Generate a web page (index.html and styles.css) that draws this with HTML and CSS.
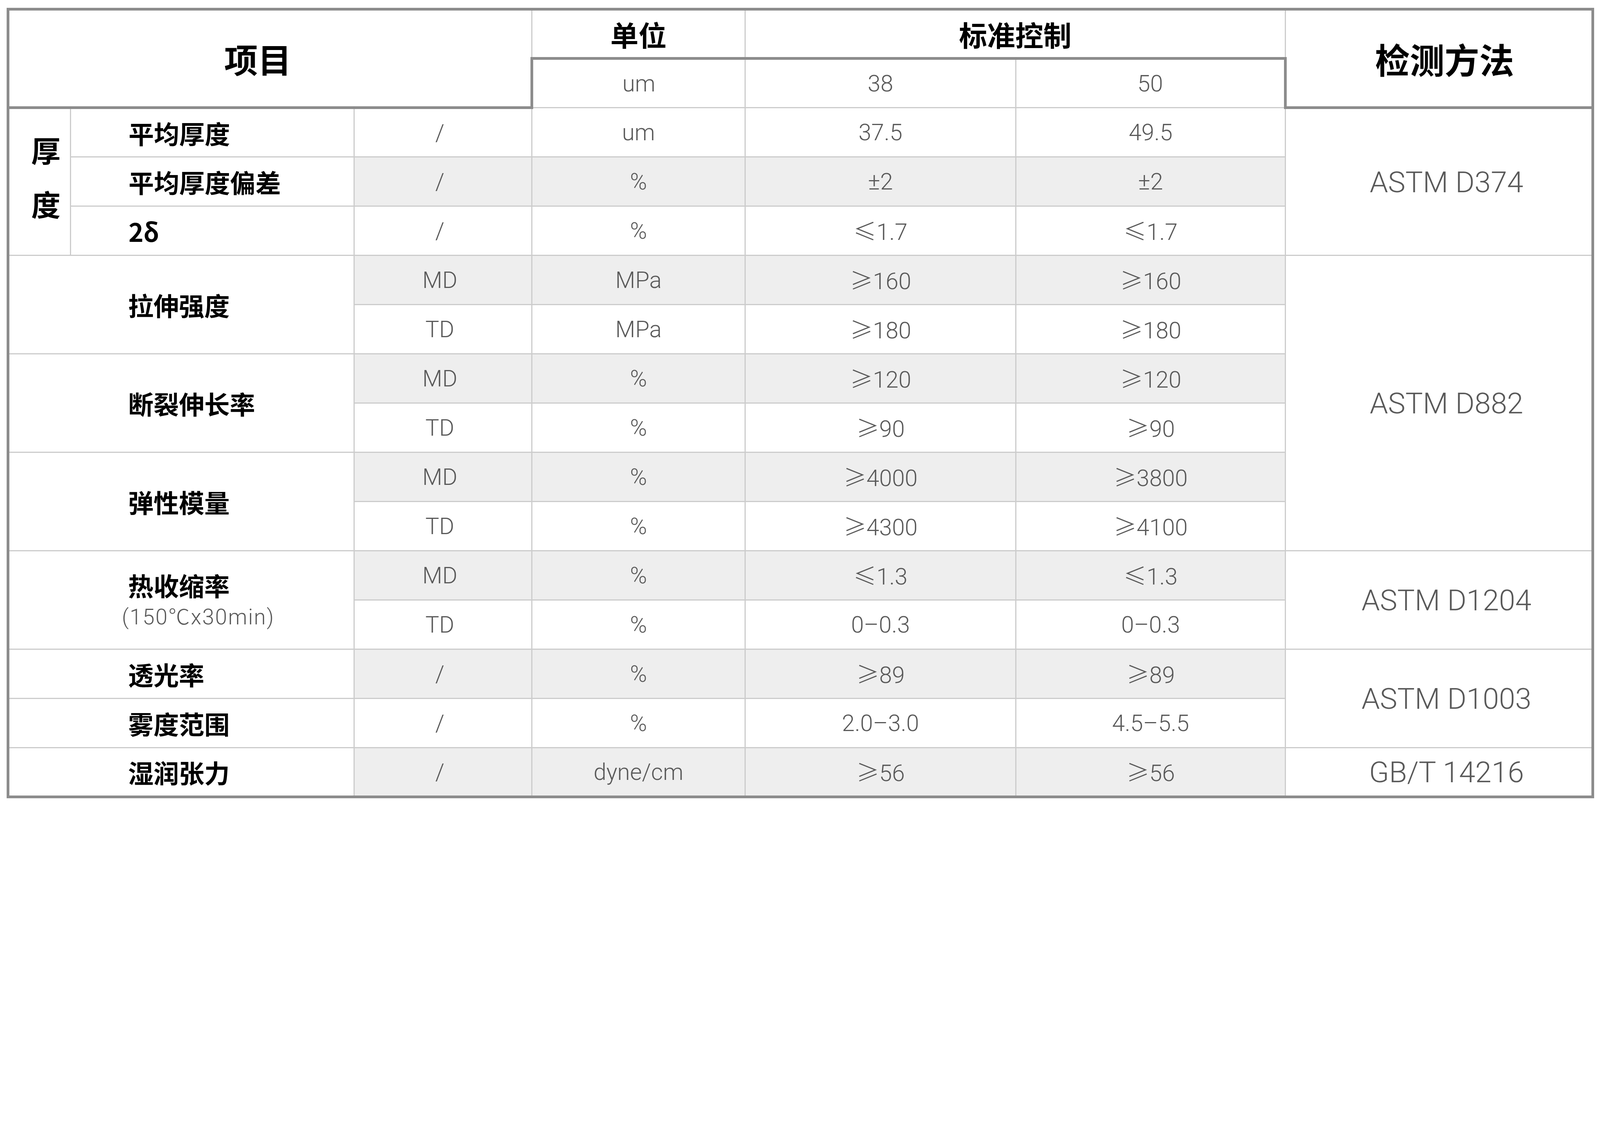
FILE: index.html
```html
<!DOCTYPE html>
<html lang="zh-CN">
<head>
<meta charset="utf-8">
<title>技术参数</title>
<link rel="stylesheet" href="styles.css">
</head>
<body>
<table class="spec">
  <colgroup>
    <col class="c1"><col class="c2"><col class="c3"><col class="c4"><col class="c5"><col class="c6"><col class="c7">
  </colgroup>
  <thead>
    <tr>
      <th colspan="3" rowspan="2" class="h-main h-item">项目</th>
      <th class="h-sub step-b">单位</th>
      <th colspan="2" class="h-sub step-b">标准控制</th>
      <th rowspan="2" class="h-main h-method">检测方法</th>
    </tr>
    <tr>
      <td class="v step-l">um</td>
      <td class="v">38</td>
      <td class="v step-r">50</td>
    </tr>
  </thead>
  <tbody>
    <tr>
      <td rowspan="3" class="grp"><span class="grp-ch">厚</span><span class="grp-ch">度</span></td>
      <td class="name name-in">平均厚度</td>
      <td class="v d">/</td><td class="v">um</td><td class="v">37.5</td><td class="v">49.5</td>
      <td rowspan="3" class="m">ASTM D374</td>
    </tr>
    <tr>
      <td class="name name-in">平均厚度偏差</td>
      <td class="v d sh">/</td><td class="v sh">%</td><td class="v sh">±2</td><td class="v sh">±2</td>
    </tr>
    <tr>
      <td class="name name-in">2δ</td>
      <td class="v d">/</td><td class="v">%</td><td class="v"><span class="cmp">≤</span>1.7</td><td class="v"><span class="cmp">≤</span>1.7</td>
    </tr>

    <tr>
      <td colspan="2" rowspan="2" class="name name-out">拉伸强度</td>
      <td class="v d sh">MD</td><td class="v sh">MPa</td><td class="v sh"><span class="cmp">≥</span>160</td><td class="v sh"><span class="cmp">≥</span>160</td>
      <td rowspan="6" class="m">ASTM D882</td>
    </tr>
    <tr>
      <td class="v d">TD</td><td class="v">MPa</td><td class="v"><span class="cmp">≥</span>180</td><td class="v"><span class="cmp">≥</span>180</td>
    </tr>
    <tr>
      <td colspan="2" rowspan="2" class="name name-out">断裂伸长率</td>
      <td class="v d sh">MD</td><td class="v sh">%</td><td class="v sh"><span class="cmp">≥</span>120</td><td class="v sh"><span class="cmp">≥</span>120</td>
    </tr>
    <tr>
      <td class="v d">TD</td><td class="v">%</td><td class="v"><span class="cmp">≥</span>90</td><td class="v"><span class="cmp">≥</span>90</td>
    </tr>
    <tr>
      <td colspan="2" rowspan="2" class="name name-out">弹性模量</td>
      <td class="v d sh">MD</td><td class="v sh">%</td><td class="v sh"><span class="cmp">≥</span>4000</td><td class="v sh"><span class="cmp">≥</span>3800</td>
    </tr>
    <tr>
      <td class="v d">TD</td><td class="v">%</td><td class="v"><span class="cmp">≥</span>4300</td><td class="v"><span class="cmp">≥</span>4100</td>
    </tr>

    <tr>
      <td colspan="2" rowspan="2" class="name name-out">
        <span class="name-main">热收缩率</span>
        <span class="name-note">(150℃x30min)</span>
      </td>
      <td class="v d sh">MD</td><td class="v sh">%</td><td class="v sh"><span class="cmp">≤</span>1.3</td><td class="v sh"><span class="cmp">≤</span>1.3</td>
      <td rowspan="2" class="m">ASTM D1204</td>
    </tr>
    <tr>
      <td class="v d">TD</td><td class="v">%</td><td class="v">0–0.3</td><td class="v">0–0.3</td>
    </tr>

    <tr>
      <td colspan="2" class="name name-out">透光率</td>
      <td class="v d sh">/</td><td class="v sh">%</td><td class="v sh"><span class="cmp">≥</span>89</td><td class="v sh"><span class="cmp">≥</span>89</td>
      <td rowspan="2" class="m">ASTM D1003</td>
    </tr>
    <tr>
      <td colspan="2" class="name name-out">雾度范围</td>
      <td class="v d">/</td><td class="v">%</td><td class="v">2.0–3.0</td><td class="v">4.5–5.5</td>
    </tr>
    <tr>
      <td colspan="2" class="name name-out">湿润张力</td>
      <td class="v d sh">/</td><td class="v sh">dyne/cm</td><td class="v sh"><span class="cmp">≥</span>56</td><td class="v sh"><span class="cmp">≥</span>56</td>
      <td class="m">GB/T 14216</td>
    </tr>
  </tbody>
</table>
</body>
</html>
```

FILE: styles.css
```css
html, body {
  margin: 0;
  padding: 0;
  background: #ffffff;
}

body {
  padding: 20px 0 0 17px;
  font-family: Roboto, "Noto Sans CJK SC", sans-serif;
}

.spec {
  border-collapse: collapse;
  table-layout: fixed;
  width: 4057px;
  border: 7px solid #8c8c8c;
}

.c1 { width: 160px; }
.c2 { width: 726px; }
.c3 { width: 455px; }
.c4 { width: 546px; }
.c5 { width: 693px; }
.c6 { width: 690px; }
.c7 { width: 787px; }

.spec tr {
  height: 126px;
}

.spec th,
.spec td {
  border: 3px solid #cccccc;
  padding: 0;
  vertical-align: middle;
  text-align: center;
  background: #ffffff;
}

.spec .h-main {
  font-family: "Noto Sans CJK SC", sans-serif;
  font-weight: 700;
  font-size: 86px;
  color: #000000;
  border-bottom: 7px solid #8c8c8c;
}

.spec .h-item {
  padding-right: 62px;
}

.spec .h-method {
  font-size: 89px;
  padding-left: 28px;
}

.spec .h-sub {
  font-family: "Noto Sans CJK SC", sans-serif;
  font-weight: 700;
  font-size: 72px;
  color: #000000;
}

.spec .step-b {
  border-bottom: 7px solid #8c8c8c;
}

.spec .step-l {
  border-left: 7px solid #8c8c8c;
}

.spec .step-r {
  border-right: 7px solid #8c8c8c;
}

.spec .v {
  font-family: Roboto, "Noto Sans CJK SC", sans-serif;
  font-weight: 300;
  font-size: 59px;
  line-height: 1;
  color: #595959;
  white-space: nowrap;
}

.spec .d {
  padding-right: 16px;
}

.spec .sh {
  background: #eeeeee;
}

.cmp {
  font-family: "Noto Sans CJK SC", sans-serif;
  font-weight: 300;
  line-height: 1;
}

.spec .m {
  font-family: Roboto, "Noto Sans CJK SC", sans-serif;
  font-weight: 300;
  font-size: 75px;
  color: #595959;
  white-space: nowrap;
  padding-left: 40px;
}

.spec .grp {
  font-family: "Noto Sans CJK SC", sans-serif;
  font-weight: 700;
  font-size: 75px;
  color: #000000;
  padding: 0 0 28px 32px;
}

.grp-ch {
  display: block;
  line-height: 138px;
}

.spec .name {
  font-family: "Noto Sans CJK SC", sans-serif;
  font-weight: 700;
  font-size: 65px;
  color: #000000;
  text-align: left;
  white-space: nowrap;
}

.spec .name-in {
  padding-left: 147px;
}

.spec .name-out {
  padding-left: 304px;
}

.name-main {
  display: block;
  line-height: 86px;
}

.name-note {
  display: block;
  margin-left: -16px;
  font-family: Roboto, "Noto Sans CJK SC", sans-serif;
  font-weight: 300;
  font-size: 55px;
  letter-spacing: 2.5px;
  line-height: 78px;
  color: #595959;
}
```
